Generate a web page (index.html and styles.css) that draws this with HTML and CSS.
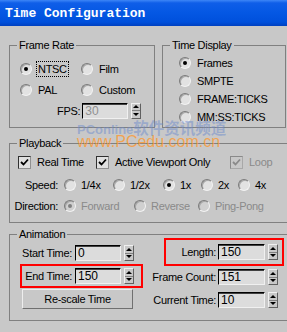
FILE: index.html
```html
<!DOCTYPE html>
<html lang="en">
<head>
  <meta charset="UTF-8">
  <title>Time Configuration</title>
  <link rel="stylesheet" href="styles.css">
</head>
<body>
<div class="ventana">
  <div class="titulo">Time Configuration</div>
  <div class="cliente">
    <div class="fila-superior">
      <fieldset class="grupo frame-rate">
        <legend>Frame Rate</legend>
        <div class="fr-fila">
          <div class="opcion"><span class="radio on"></span><span class="foco">NTSC</span></div>
          <div class="opcion"><span class="radio"></span>Film</div>
        </div>
        <div class="fr-fila">
          <div class="opcion"><span class="radio"></span>PAL</div>
          <div class="opcion"><span class="radio"></span>Custom</div>
        </div>
        <div class="fps">
          <span class="etiqueta">FPS:</span>
          <span class="campo-texto gris">30</span>
          <span class="spin"><span class="arriba"></span><span class="abajo"></span></span>
        </div>
      </fieldset>
      <fieldset class="grupo time-display">
        <legend>Time Display</legend>
        <div class="td-fila"><span class="radio on"></span>Frames</div>
        <div class="td-fila"><span class="radio"></span>SMPTE</div>
        <div class="td-fila"><span class="radio"></span>FRAME:TICKS</div>
        <div class="td-fila"><span class="radio"></span>MM:SS:TICKS</div>
      </fieldset>
    </div>

    <fieldset class="grupo ancho playback">
      <legend>Playback</legend>
      <div class="cb-fila">
        <div class="opcion"><span class="check"><svg width="11" height="11" viewBox="0 0 11 11"><path d="M2 5 L4.5 7.5 L9 2.5" fill="none" stroke="#000" stroke-width="1.8"/></svg></span>Real Time</div>
        <div class="opcion"><span class="check"><svg width="11" height="11" viewBox="0 0 11 11"><path d="M2 5 L4.5 7.5 L9 2.5" fill="none" stroke="#000" stroke-width="1.8"/></svg></span>Active Viewport Only</div>
        <div class="opcion gris"><span class="check off"><svg width="11" height="11" viewBox="0 0 11 11"><path d="M2 5 L4.5 7.5 L9 2.5" fill="none" stroke="#8a8a8a" stroke-width="1.8"/></svg></span>Loop</div>
      </div>
      <div class="speed-fila">
        <span class="etiqueta">Speed:</span>
        <div class="opcion"><span class="radio"></span>1/4x</div>
        <div class="opcion"><span class="radio"></span>1/2x</div>
        <div class="opcion"><span class="radio on"></span>1x</div>
        <div class="opcion"><span class="radio"></span>2x</div>
        <div class="opcion"><span class="radio"></span>4x</div>
      </div>
      <div class="dir-fila">
        <span class="etiqueta">Direction:</span>
        <div class="opcion gris"><span class="radio on off"></span>Forward</div>
        <div class="opcion gris"><span class="radio off"></span>Reverse</div>
        <div class="opcion gris"><span class="radio off"></span>Ping-Pong</div>
      </div>
    </fieldset>

    <fieldset class="grupo ancho animation">
      <legend>Animation</legend>
      <div class="anim">
        <div class="anim-izq">
          <div class="campo">
            <span class="etiqueta">Start Time:</span>
            <span class="campo-texto">0</span>
            <span class="spin"><span class="arriba"></span><span class="abajo"></span></span>
          </div>
          <div class="campo marcado">
            <span class="etiqueta">End Time:</span>
            <span class="campo-texto">150</span>
            <span class="spin"><span class="arriba"></span><span class="abajo"></span></span>
          </div>
          <button class="boton">Re-scale Time</button>
        </div>
        <div class="anim-der">
          <div class="campo marcado largo">
            <span class="etiqueta">Length:</span>
            <span class="campo-texto">150</span>
            <span class="spin"><span class="arriba"></span><span class="abajo"></span></span>
          </div>
          <div class="campo">
            <span class="etiqueta">Frame Count:</span>
            <span class="campo-texto">151</span>
            <span class="spin"><span class="arriba"></span><span class="abajo"></span></span>
          </div>
          <div class="campo">
            <span class="etiqueta">Current Time:</span>
            <span class="campo-texto">10</span>
            <span class="spin"><span class="arriba"></span><span class="abajo"></span></span>
          </div>
        </div>
      </div>
    </fieldset>
  </div>

  <div class="marca-cn"><b>PConline</b><span class="cn">软件资讯频道</span></div>
  <div class="marca-url">www.PCedu.com.cn</div>
</div>
</body>
</html>
```

FILE: styles.css
```css
body {
  margin: 0;
  padding: 0;
  background-color: #c8c8c8;
  font-family: "Liberation Sans", Arial, sans-serif;
  font-size: 11px;
  letter-spacing: -0.3px;
  color: #000;
}

.ventana {
  position: relative;
  width: 287px;
  height: 332px;
  overflow: hidden;
  background-color: #c8c8c8;
}

.titulo {
  height: 26px;
  line-height: 27px;
  padding-left: 5px;
  font-family: "Liberation Mono", "DejaVu Sans Mono", monospace;
  font-weight: bold;
  font-size: 13px;
  letter-spacing: 0;
  color: #fff;
  background: linear-gradient(#3d86f7 0, #0f5ee8 3px, #0558e4 12px, #0050dc 22px, #0040c0 26px);
}

.cliente {
  width: 290px;
  padding-left: 9px;
}

.fila-superior {
  display: flex;
  gap: 7px;
  margin-top: 13px;
}

.grupo {
  margin: 0;
  padding: 0;
  min-width: 0;
  border: 1px solid #808080;
  box-sizing: border-box;
}

legend {
  font-size: 11px;
  line-height: 12px;
  padding: 0 2px;
  margin-left: 7px;
}

.frame-rate {
  width: 146px;
  padding: 7px 0 6px;
}

.time-display {
  width: 124px;
  padding: 3px 0 1px;
}

.ancho {
  width: 282px;
}

.playback {
  margin-top: 9px;
  padding: 2px 0 6px;
}

.animation {
  margin-top: 5px;
  padding: 0 0 7px;
}

/* controles */
.opcion {
  display: flex;
  align-items: center;
  white-space: nowrap;
}

.gris {
  color: #8a8a8a;
}

.radio {
  position: relative;
  flex-shrink: 0;
  width: 12px;
  height: 12px;
  margin-right: 6px;
  box-sizing: border-box;
  border-radius: 50%;
  border: 1px solid;
  border-color: #7a7a7a #f2f2f2 #f2f2f2 #7a7a7a;
  background-color: #e2e2e2;
  box-shadow: inset 1px 1px 0 #a8a8a8;
}

.radio.on::after {
  content: "";
  position: absolute;
  left: 3px;
  top: 3px;
  width: 4px;
  height: 4px;
  border-radius: 50%;
  background-color: #000;
}

.radio.off {
  background-color: #d0d0d0;
}

.radio.on.off::after {
  background-color: #808080;
}

.check {
  display: flex;
  align-items: center;
  justify-content: center;
  flex-shrink: 0;
  width: 13px;
  height: 13px;
  margin-right: 6px;
  box-sizing: border-box;
  border: 1px solid;
  border-color: #303030 #909090 #909090 #303030;
  background-color: #e0e0e0;
}

.check.off {
  border-color: #8a8a8a #a8a8a8 #a8a8a8 #8a8a8a;
  background-color: #c8c8c8;
}

.foco {
  margin-left: -2px;
  padding: 1px 1px;
  border: 1px dotted #000;
}

.campo-texto {
  flex-shrink: 0;
  width: 46px;
  height: 16px;
  line-height: 15px;
  padding-left: 2px;
  box-sizing: border-box;
  border: 1px solid;
  border-color: #000 #f0f0f0 #f0f0f0 #000;
  box-shadow: inset 0 1px 0 #404040;
  background-color: #dcdcdc;
  font-size: 12px;
  letter-spacing: 0;
}

.campo-texto.gris {
  color: #909090;
}

.spin {
  display: flex;
  flex-direction: column;
  flex-shrink: 0;
  width: 10px;
  height: 16px;
  margin-left: 3px;
  box-sizing: border-box;
  border: 1px solid;
  border-color: #f0f0f0 #606060 #606060 #f0f0f0;
}

.arriba, .abajo {
  flex: 1;
  display: flex;
  align-items: center;
  justify-content: center;
}

.arriba {
  border-bottom: 1px solid #808080;
}

.arriba::after {
  content: "";
  border-left: 3px solid transparent;
  border-right: 3px solid transparent;
  border-bottom: 3px solid #000;
}

.abajo::after {
  content: "";
  border-left: 3px solid transparent;
  border-right: 3px solid transparent;
  border-top: 3px solid #000;
}

/* frame rate */
.fr-fila {
  display: grid;
  grid-template-columns: 61px auto;
  align-items: center;
  height: 21px;
  padding-left: 10px;
}

.fps {
  display: flex;
  align-items: center;
  height: 21px;
  padding-left: 47px;
}

.fps .etiqueta {
  margin-right: 2px;
}

/* time display */
.td-fila {
  display: flex;
  align-items: center;
  height: 18px;
  padding-left: 16px;
}

/* playback */
.cb-fila {
  display: grid;
  grid-template-columns: 78px 134px auto;
  align-items: center;
  height: 22px;
  padding-left: 8px;
}

.speed-fila, .dir-fila {
  display: grid;
  align-items: center;
}

.speed-fila {
  grid-template-columns: 54px 49px 50px 38px 37px auto;
  height: 23px;
}

.dir-fila {
  grid-template-columns: 54px 70px 64px auto;
  height: 20px;
}

.speed-fila .etiqueta, .dir-fila .etiqueta {
  text-align: right;
  padding-right: 6px;
}

.speed-fila .radio, .dir-fila .radio {
  margin-right: 5px;
}

/* animation */
.anim {
  display: flex;
}

.anim-izq {
  width: 150px;
}

.campo {
  display: flex;
  align-items: center;
  justify-content: flex-end;
  height: 20px;
  margin: 3px 0;
  box-sizing: border-box;
  white-space: nowrap;
}

.campo .etiqueta {
  flex-shrink: 0;
  margin-right: 3px;
}

.anim-izq .campo {
  width: 119px;
  margin-left: 12px;
  padding-right: 7px;
}

.anim-der .campo {
  width: 116px;
  margin-left: 6px;
  padding-right: 4px;
}

.anim-der .campo-texto {
  width: 47px;
}

.anim-der .campo .etiqueta {
  margin-right: 2px;
}

.anim-der .largo {
  height: 24px;
  margin: 0 0 2px 6px;
}

.marcado {
  outline: 2px solid #ff0000;
}

.boton {
  display: block;
  width: 111px;
  height: 20px;
  margin: 3px 0 3px 12px;
  padding: 0;
  box-sizing: border-box;
  border: 1px solid;
  border-color: #eeeeee #707070 #707070 #eeeeee;
  background-color: #c8c8c8;
  font-family: "Liberation Sans", Arial, sans-serif;
  font-size: 11px;
  letter-spacing: -0.3px;
  color: #000;
}

/* marcas de agua encima del diálogo */
.marca-cn {
  position: absolute;
  left: 77px;
  top: 116px;
  color: rgba(110, 140, 205, 0.5);
  font-size: 13px;
  letter-spacing: 0;
  white-space: nowrap;
}

.marca-cn .cn {
  font-family: "Noto Sans CJK SC", sans-serif;
  font-size: 15.5px;
  font-weight: bold;
}

.marca-url {
  position: absolute;
  left: 77px;
  top: 133px;
  color: rgba(255, 150, 40, 0.75);
  font-size: 16px;
  letter-spacing: 0;
  white-space: nowrap;
}
```
